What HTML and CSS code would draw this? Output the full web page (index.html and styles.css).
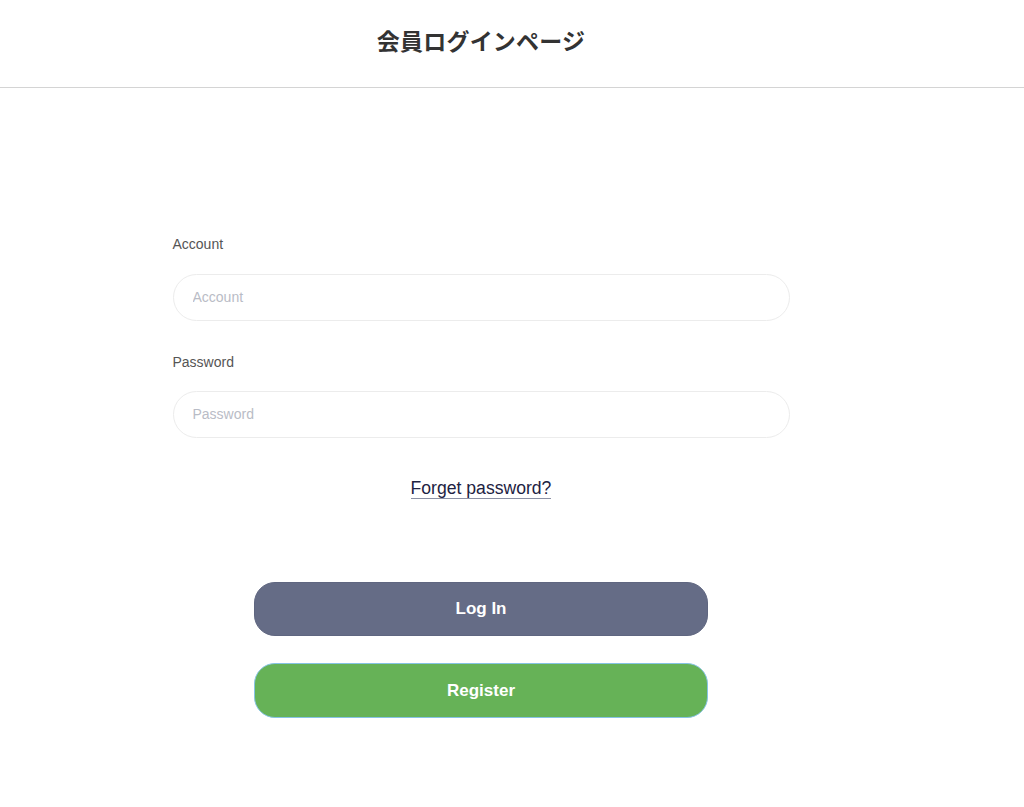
FILE: index.html
```html
<!DOCTYPE html>
<html lang="ja">
<head>
<meta charset="utf-8">
<title>会員ログインページ</title>
<link rel="stylesheet" href="styles.css">
</head>
<body>
<header class="header">
  <div class="header-inner">
    <h1 class="title">会員ログインページ</h1>
  </div>
</header>
<main class="page">
  <form class="form">
    <label class="label" for="account">Account</label>
    <input class="field" id="account" type="text" placeholder="Account">
    <label class="label label-pw" for="password">Password</label>
    <input class="field" id="password" type="password" placeholder="Password">
    <div class="forget-row"><a class="forget" href="#">Forget password?</a></div>
    <div class="buttons">
      <button type="button" class="btn btn-login">Log In</button>
      <button type="button" class="btn btn-register">Register</button>
    </div>
  </form>
</main>
</body>
</html>
```

FILE: styles.css
```css
* { box-sizing: border-box; }
html, body { margin: 0; padding: 0; background: #fff; }
body { font-family: "Liberation Sans", Arial, "Noto Sans CJK JP", sans-serif; }

.header {
  height: 88px;
  border-bottom: 1px solid #d4d4d4;
}
.header-inner {
  width: 962px;
  height: 87px;
  display: flex;
  align-items: center;
  justify-content: center;
}
.title {
  margin: 0;
  padding-bottom: 8px;
  font-family: "Noto Sans CJK JP", sans-serif;
  font-size: 23px;
  font-weight: 700;
  letter-spacing: 0.2px;
  color: #333;
  line-height: 30px;
}

.page {
  width: 962px;
  padding-top: 147px;
}
.form {
  width: 617px;
  margin: 0 auto;
  display: flex;
  flex-direction: column;
}
.label {
  font-size: 14px;
  line-height: 19px;
  color: #555;
  margin-bottom: 20px;
}
.label-pw { margin-top: 32px; margin-bottom: 19px; }
.field {
  height: 47px;
  width: 100%;
  border: 1px solid #ececec;
  border-radius: 24px;
  padding: 0 19px 2px;
  font-family: "Liberation Sans", Arial, sans-serif;
  font-size: 14px;
  color: #333;
  outline: none;
  background: #fff;
}
.field::placeholder { color: #b9bcc6; }

.forget-row {
  margin-top: 40px;
  display: flex;
  justify-content: center;
}
.forget {
  font-size: 17.6px;
  line-height: 20px;
  color: #1d2242;
  text-decoration: none;
  border-bottom: 1px solid #8c91a5;
}

.buttons {
  margin-top: 83px;
  display: flex;
  flex-direction: column;
  align-items: center;
  gap: 27px;
}
.btn {
  width: 454px;
  height: 55px;
  border-radius: 21px;
  font-family: "Liberation Sans", Arial, sans-serif;
  font-size: 17px;
  font-weight: 700;
  color: #fff;
  cursor: pointer;
}
.btn-login {
  height: 54px;
  background: #656c86;
  border: 1px solid #5f6680;
}
.btn-register {
  background: #66b257;
  border: 1px solid #86c3e3;
}
```
